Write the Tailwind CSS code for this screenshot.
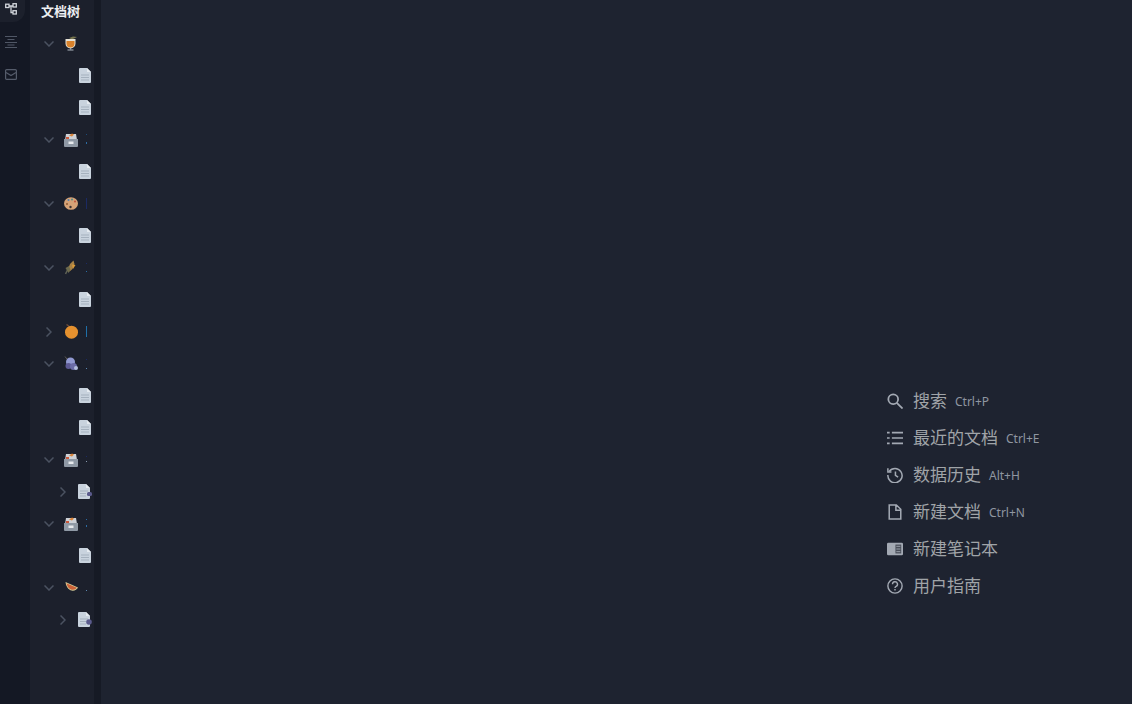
<!doctype html>
<html lang="zh">
<head>
<meta charset="utf-8">
<script src="https://cdn.jsdelivr.net/npm/@tailwindcss/browser@4"></script>
</head>
<body class="m-0 overflow-hidden bg-[#1e2330]">
<div class="flex h-[704px] w-[1132px] overflow-hidden bg-[#1e2330] font-['Noto_Sans','Noto_Sans_CJK_SC',sans-serif]">

  <!-- icon rail -->
  <nav class="flex w-[30px] shrink-0 flex-col bg-[#141824]">
    <div class="flex h-[22px] w-[25px] items-start rounded-br-xl bg-[#1c202c] pl-[5px]">
      <svg class="mt-[3px] h-[12px] w-[12px]" viewBox="0 0 12 12" fill="none" stroke="#d1d5db" stroke-width="1.300"><rect x=".7" y="1.200" width="3.300" height="3.300"/><rect x="8" y=".7" width="3.300" height="3.300"/><rect x="8" y="7.700" width="3.300" height="3.300"/><path d="M4 3h4M6 3v6.500h2"/></svg>
    </div>
    <div class="mt-[14px] flex h-[12px] w-[22px] justify-center">
      <svg class="h-[12px] w-[12px]" viewBox="0 0 12 12" fill="none" stroke="#505766" stroke-width="1.100"><path d="M0 .5h12M2.500 3.500h7M0 6.500h12M2.500 9h7M0 11.500h12"/></svg>
    </div>
    <div class="mt-[21px] flex h-[12px] w-[22px] justify-center">
      <svg class="h-[11px] w-[12px]" viewBox="0 0 12 11" fill="none" stroke="#555c6b" stroke-width="1.200"><rect x=".6" y=".6" width="10.800" height="9.800" rx="1"/><path d="M1 3.500l5 3L11 3.500"/></svg>
    </div>
  </nav>

  <!-- doc tree -->
  <aside class="w-[64px] shrink-0 overflow-hidden bg-[#1c202c]">
    <div class="flex h-[27px] items-start pt-[2px] pl-[11px] text-[13px] leading-[18px] font-bold whitespace-nowrap text-[#eceef1]">文档树</div>
    <ul class="flex flex-col">

      <li class="flex h-[32px] items-center pl-[14px]">
        <svg class="mt-[1px] h-[6px] w-[10px]" viewBox="0 0 10 6" fill="none" stroke="#4b5261" stroke-width="1.500"><path d="M.5.500 5 5 9.500.5"/></svg>
        <svg class="ml-[10px] h-[15px] w-[14px]" viewBox="0 0 14 15"><path d="M5 2 9 .5l4 .5L8 3.500z" fill="#77754f"/><path d="M1.500 3h10v4.500a5 5 0 0 1-10 0z" fill="#e6e2d6"/><path d="M2.500 5h8v2.500a4 4 0 0 1-8 0z" fill="#d9822b"/><path d="M6 12h1.200v1.500H6z" fill="#9aa3ad"/><path d="M3.500 13.500h6v1h-6z" fill="#aeb6bf"/></svg>
      </li>
      <li class="flex h-[32px] items-center pl-[49px]"><svg class="h-[15px] w-[12px]" viewBox="0 0 12 15"><path d="M1 0h7l4 4v10a1 1 0 0 1-1 1H1a1 1 0 0 1-1-1V1a1 1 0 0 1 1-1z" fill="#c9d3de"/><path d="M8 0v4h4z" fill="#e6ebf0"/><path d="M2 7h8M2 9.500h8M2 12h8" stroke="#a5b1be"/></svg></li>
      <li class="flex h-[32px] items-center pl-[49px]"><svg class="h-[15px] w-[12px]" viewBox="0 0 12 15"><path d="M1 0h7l4 4v10a1 1 0 0 1-1 1H1a1 1 0 0 1-1-1V1a1 1 0 0 1 1-1z" fill="#c9d3de"/><path d="M8 0v4h4z" fill="#e6ebf0"/><path d="M2 7h8M2 9.500h8M2 12h8" stroke="#a5b1be"/></svg></li>

      <li class="flex h-[32px] items-center pl-[14px]">
        <svg class="mt-[1px] h-[6px] w-[10px]" viewBox="0 0 10 6" fill="none" stroke="#4b5261" stroke-width="1.500"><path d="M.5.500 5 5 9.500.5"/></svg>
        <svg class="mt-[1px] ml-[10px] h-[14px] w-[14px]" viewBox="0 0 14 14"><path d="M2 1h10l1 6H1z" fill="#cdd1d7"/><path d="M5 2.500l3-2 2 1-2 2z" fill="#d9843a"/><path d="M2 4h3v2H2z" fill="#c9583a"/><path d="M0 6h14v7a1 1 0 0 1-1 1H1a1 1 0 0 1-1-1z" fill="#8f99a5"/><path d="M4.500 8.500h5v2.500h-5z" fill="#e6e9ed"/></svg>
        <div class="ml-[8px] flex h-[10px] w-px flex-col justify-between"><span class="h-px w-px bg-[#1d4a77]"></span><span class="h-[2px] w-px bg-[#2b6ca3]"></span></div>
      </li>
      <li class="flex h-[32px] items-center pl-[49px]"><svg class="h-[15px] w-[12px]" viewBox="0 0 12 15"><path d="M1 0h7l4 4v10a1 1 0 0 1-1 1H1a1 1 0 0 1-1-1V1a1 1 0 0 1 1-1z" fill="#c9d3de"/><path d="M8 0v4h4z" fill="#e6ebf0"/><path d="M2 7h8M2 9.500h8M2 12h8" stroke="#a5b1be"/></svg></li>

      <li class="flex h-[32px] items-center pl-[14px]">
        <svg class="mt-[1px] h-[6px] w-[10px]" viewBox="0 0 10 6" fill="none" stroke="#4b5261" stroke-width="1.500"><path d="M.5.500 5 5 9.500.5"/></svg>
        <svg class="mt-[1px] ml-[10px] h-[13px] w-[14px]" viewBox="0 0 14 13"><ellipse cx="7" cy="6.500" rx="7" ry="6.300" fill="#d5a277"/><circle cx="4.500" cy="3" r="1" fill="#4a7db0"/><circle cx="8" cy="2.500" r="1" fill="#4d8a8a"/><circle cx="11" cy="4.500" r="1" fill="#c0503c"/><circle cx="6.500" cy="10" r="1.200" fill="#3a3434"/><circle cx="3" cy="7" r="1" fill="#8c5a32"/></svg>
        <span class="mt-[1px] ml-[8px] h-[11px] w-px bg-[#1b2a63]"></span>
      </li>
      <li class="flex h-[32px] items-center pl-[49px]"><svg class="h-[15px] w-[12px]" viewBox="0 0 12 15"><path d="M1 0h7l4 4v10a1 1 0 0 1-1 1H1a1 1 0 0 1-1-1V1a1 1 0 0 1 1-1z" fill="#c9d3de"/><path d="M8 0v4h4z" fill="#e6ebf0"/><path d="M2 7h8M2 9.500h8M2 12h8" stroke="#a5b1be"/></svg></li>

      <li class="flex h-[32px] items-center pl-[14px]">
        <svg class="mt-[1px] h-[6px] w-[10px]" viewBox="0 0 10 6" fill="none" stroke="#4b5261" stroke-width="1.500"><path d="M.5.500 5 5 9.500.5"/></svg>
        <svg class="ml-[10px] h-[15px] w-[14px]" viewBox="0 0 14 15"><path d="M1.500 14 5 7" stroke="#5e6055" stroke-width="1.500"/><path d="M4 9l2-5 3.500-3.500 1 3.500-2 5-3 2.500z" fill="#a98245"/><path d="M8 4.500l3.500.5L9 9z" fill="#d99a3a"/><path d="M1.500 8l3.500-2 1.500 4-2 3z" fill="#6c6a4e"/></svg>
        <div class="mt-[1px] ml-[8px] flex h-[9px] w-px flex-col justify-between"><span class="h-px w-px bg-[#1b2a63]"></span><span class="h-px w-px bg-[#2b6ca3]"></span></div>
      </li>
      <li class="flex h-[32px] items-center pl-[49px]"><svg class="h-[15px] w-[12px]" viewBox="0 0 12 15"><path d="M1 0h7l4 4v10a1 1 0 0 1-1 1H1a1 1 0 0 1-1-1V1a1 1 0 0 1 1-1z" fill="#c9d3de"/><path d="M8 0v4h4z" fill="#e6ebf0"/><path d="M2 7h8M2 9.500h8M2 12h8" stroke="#a5b1be"/></svg></li>

      <li class="flex h-[32px] items-center pl-[14px]">
        <svg class="mx-[2px] mt-[1px] h-[10px] w-[6px]" viewBox="0 0 6 10" fill="none" stroke="#4b5261" stroke-width="1.500"><path d="M.5.500 5 5 .5 9.500"/></svg>
        <svg class="ml-[10px] h-[15px] w-[14px]" viewBox="0 0 14 15"><path d="M2.500 .5l3.500 2.500" stroke="#6a4a3a" stroke-width="1.500"/><circle cx="7.500" cy="8.200" r="6.500" fill="#e5912f"/></svg>
        <span class="mt-[1px] ml-[8px] h-[11px] w-px bg-[#1f6fa8]"></span>
      </li>

      <li class="flex h-[32px] items-center pl-[14px]">
        <svg class="mt-[1px] h-[6px] w-[10px]" viewBox="0 0 10 6" fill="none" stroke="#4b5261" stroke-width="1.500"><path d="M.5.500 5 5 9.500.5"/></svg>
        <svg class="ml-[10px] h-[15px] w-[14px]" viewBox="0 0 14 15"><path d="M1 .5l3 4" stroke="#5e5a52"/><circle cx="6.500" cy="6" r="4.500" fill="#929ad2"/><circle cx="4.500" cy="10" r="3" fill="#5d5a95"/><circle cx="9.500" cy="10.500" r="3.500" fill="#6c6da8"/><circle cx="12" cy="12" r="2" fill="#b4bede"/></svg>
        <div class="mt-[1px] ml-[8px] flex h-[10px] w-px flex-col justify-between"><span class="h-px w-px bg-[#1b2a63]"></span><span class="h-px w-px bg-[#5d88b0]"></span></div>
      </li>
      <li class="flex h-[32px] items-center pl-[49px]"><svg class="h-[15px] w-[12px]" viewBox="0 0 12 15"><path d="M1 0h7l4 4v10a1 1 0 0 1-1 1H1a1 1 0 0 1-1-1V1a1 1 0 0 1 1-1z" fill="#c9d3de"/><path d="M8 0v4h4z" fill="#e6ebf0"/><path d="M2 7h8M2 9.500h8M2 12h8" stroke="#a5b1be"/></svg></li>
      <li class="flex h-[32px] items-center pl-[49px]"><svg class="h-[15px] w-[12px]" viewBox="0 0 12 15"><path d="M1 0h7l4 4v10a1 1 0 0 1-1 1H1a1 1 0 0 1-1-1V1a1 1 0 0 1 1-1z" fill="#c9d3de"/><path d="M8 0v4h4z" fill="#e6ebf0"/><path d="M2 7h8M2 9.500h8M2 12h8" stroke="#a5b1be"/></svg></li>

      <li class="flex h-[32px] items-center pl-[14px]">
        <svg class="mt-[1px] h-[6px] w-[10px]" viewBox="0 0 10 6" fill="none" stroke="#4b5261" stroke-width="1.500"><path d="M.5.500 5 5 9.500.5"/></svg>
        <svg class="mt-[1px] ml-[10px] h-[14px] w-[14px]" viewBox="0 0 14 14"><path d="M2 1h10l1 6H1z" fill="#cdd1d7"/><path d="M5 2.500l3-2 2 1-2 2z" fill="#d9843a"/><path d="M2 4h3v2H2z" fill="#c9583a"/><path d="M0 6h14v7a1 1 0 0 1-1 1H1a1 1 0 0 1-1-1z" fill="#8f99a5"/><path d="M4.500 8.500h5v2.500h-5z" fill="#e6e9ed"/></svg>
        <div class="ml-[8px] flex h-[6px] w-px flex-col justify-between"><span class="h-px w-px bg-[#1b2a63]"></span><span class="h-px w-px bg-[#8a9bb0]"></span></div>
      </li>
      <li class="flex h-[32px] items-center pl-[30px]">
        <svg class="mt-[1px] h-[10px] w-[6px]" viewBox="0 0 6 10" fill="none" stroke="#4b5261" stroke-width="1.500"><path d="M.5.500 5 5 .5 9.500"/></svg>
        <svg class="ml-[12px] h-[15px] w-[14px]" viewBox="0 0 14 15"><path d="M1 0h7l4 4v10a1 1 0 0 1-1 1H1a1 1 0 0 1-1-1V1a1 1 0 0 1 1-1z" fill="#c9d3de"/><path d="M8 0v4h4z" fill="#e6ebf0"/><path d="M2 7h8M2 9.500h6M2 12h6" stroke="#a5b1be"/><rect x="9" y="8" width="5" height="4" rx="1.500" fill="#5a5a8c"/></svg>
      </li>

      <li class="flex h-[32px] items-center pl-[14px]">
        <svg class="mt-[1px] h-[6px] w-[10px]" viewBox="0 0 10 6" fill="none" stroke="#4b5261" stroke-width="1.500"><path d="M.5.500 5 5 9.500.5"/></svg>
        <svg class="mt-[1px] ml-[10px] h-[14px] w-[14px]" viewBox="0 0 14 14"><path d="M2 1h10l1 6H1z" fill="#cdd1d7"/><path d="M5 2.500l3-2 2 1-2 2z" fill="#d9843a"/><path d="M2 4h3v2H2z" fill="#c9583a"/><path d="M0 6h14v7a1 1 0 0 1-1 1H1a1 1 0 0 1-1-1z" fill="#8f99a5"/><path d="M4.500 8.500h5v2.500h-5z" fill="#e6e9ed"/></svg>
        <div class="ml-[8px] flex h-[8px] w-px flex-col justify-between"><span class="h-px w-px bg-[#2b6ca3]"></span><span class="h-[2px] w-px bg-[#2b6ca3]"></span></div>
      </li>
      <li class="flex h-[32px] items-center pl-[49px]"><svg class="h-[15px] w-[12px]" viewBox="0 0 12 15"><path d="M1 0h7l4 4v10a1 1 0 0 1-1 1H1a1 1 0 0 1-1-1V1a1 1 0 0 1 1-1z" fill="#c9d3de"/><path d="M8 0v4h4z" fill="#e6ebf0"/><path d="M2 7h8M2 9.500h8M2 12h8" stroke="#a5b1be"/></svg></li>

      <li class="flex h-[32px] items-center pl-[14px]">
        <svg class="mt-[1px] h-[6px] w-[10px]" viewBox="0 0 10 6" fill="none" stroke="#4b5261" stroke-width="1.500"><path d="M.5.500 5 5 9.500.5"/></svg>
        <svg class="ml-[10px] h-[10px] w-[14px]" viewBox="0 0 14 10"><path d="M1.500 0 14 5.500C12 10 3 11 1.500 0z" fill="#d8cf9a"/><path d="M2.500 1.200 12.800 5.800C11 9 4 9 2.500 1.200z" fill="#cc6238"/></svg>
        <span class="mt-[7px] ml-[8px] h-px w-px bg-[#5d88b0]"></span>
      </li>
      <li class="flex h-[32px] items-center pl-[30px]">
        <svg class="mt-[1px] h-[10px] w-[6px]" viewBox="0 0 6 10" fill="none" stroke="#4b5261" stroke-width="1.500"><path d="M.5.500 5 5 .5 9.500"/></svg>
        <svg class="ml-[12px] h-[15px] w-[14px]" viewBox="0 0 14 15"><path d="M1 0h7l4 4v10a1 1 0 0 1-1 1H1a1 1 0 0 1-1-1V1a1 1 0 0 1 1-1z" fill="#c9d3de"/><path d="M8 0v4h4z" fill="#e6ebf0"/><path d="M2 7h8M2 9.500h6M2 12h6" stroke="#a5b1be"/><circle cx="11" cy="10" r="2.800" fill="#5a5a8c"/></svg>
      </li>
    </ul>
  </aside>

  <!-- resize gutter -->
  <div class="w-[7px] shrink-0 bg-[#161a25]"></div>

  <!-- empty editor area -->
  <main class="flex-1 pt-[383px] pl-[785px]">
    <ul class="flex flex-col text-[17px] text-[#a0a4a8]">
      <li class="flex h-[37px] items-center">
        <svg class="mx-[1px] mb-[2px] h-[16px] w-[16px]" viewBox="0 0 18 18" fill="none" stroke="#a3a9b3" stroke-width="2"><circle cx="7" cy="7" r="5.500"/><path d="M11 11l6.500 6.500"/></svg>
        <span class="mb-[1px] ml-[9px]">搜索</span><span class="ml-2 text-[12px] text-[#8f96a1]">Ctrl+P</span>
      </li>
      <li class="flex h-[37px] items-center">
        <svg class="mx-[1px] mb-[2px] h-[16px] w-[16px]" viewBox="0 0 18 18" fill="none" stroke="#a3a9b3" stroke-width="1.800"><path d="M0 3h3M5.500 3H18M0 9h3M5.500 9H18M0 15h3M5.500 15H18"/></svg>
        <span class="mb-[1px] ml-[9px]">最近的文档</span><span class="ml-2 text-[12px] text-[#8f96a1]">Ctrl+E</span>
      </li>
      <li class="flex h-[37px] items-center">
        <svg class="mx-[1px] mb-[2px] h-[16px] w-[16px]" viewBox="0 0 18 18" fill="none" stroke="#a3a9b3" stroke-width="1.700"><path d="M2.500 5A8 8 0 1 1 1 9"/><path d="M1 1.500v4h4M9.500 5v4.500l3 2"/></svg>
        <span class="mb-[1px] ml-[9px]">数据历史</span><span class="ml-2 text-[12px] text-[#8f96a1]">Alt+H</span>
      </li>
      <li class="flex h-[37px] items-center">
        <svg class="mx-[1px] mb-[2px] h-[16px] w-[16px]" viewBox="0 0 18 18" fill="none" stroke="#a3a9b3" stroke-width="1.700"><path d="M2.500 1h8l5 5v11h-13zM10 1v6h5.500"/></svg>
        <span class="mb-[1px] ml-[9px]">新建文档</span><span class="ml-2 text-[12px] text-[#8f96a1]">Ctrl+N</span>
      </li>
      <li class="flex h-[37px] items-center">
        <svg class="mx-[1px] mb-[2px] h-[16px] w-[16px]" viewBox="0 0 18 18"><path d="M1.500 2h15A1.500 1.500 0 0 1 18 3.500v11a1.500 1.500 0 0 1-1.500 1.500h-15A1.500 1.500 0 0 1 0 14.500v-11A1.500 1.500 0 0 1 1.500 2z" fill="#a3a9b3"/><rect x="9.500" y="4" width="6.500" height="10" fill="#4a4f5a"/><path d="M10.500 6h4.500M10.500 9h4.500M10.500 12h4.500" stroke="#a3a9b3"/></svg>
        <span class="mb-[1px] ml-[9px]">新建笔记本</span>
      </li>
      <li class="flex h-[37px] items-center">
        <svg class="mx-[1px] mb-[2px] h-[16px] w-[16px]" viewBox="0 0 18 18" fill="none" stroke="#a3a9b3" stroke-width="1.600"><circle cx="9" cy="9" r="8"/><path d="M6.200 7a2.800 2.800 0 1 1 4 2.500c-.8.400-1.200.9-1.200 1.800"/><path d="M9 12.500v1.600"/></svg>
        <span class="mb-[1px] ml-[9px]">用户指南</span>
      </li>
    </ul>
  </main>
</div>
</body>
</html>
